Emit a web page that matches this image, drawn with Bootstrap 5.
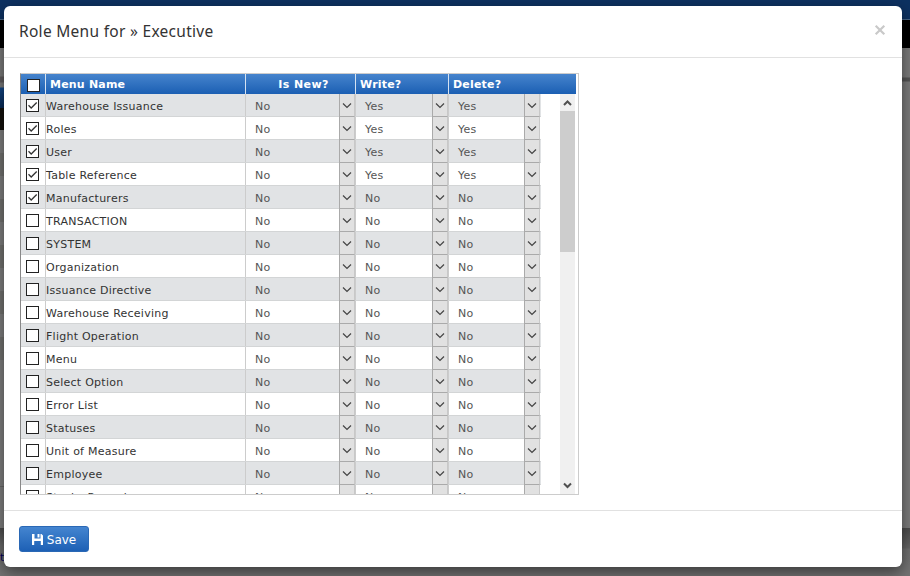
<!DOCTYPE html>
<html lang="en">
<head>
<meta charset="utf-8">
<meta name="viewport" content="width=device-width, initial-scale=1">
<title>Role Menu</title>
<link rel="stylesheet" href="https://cdn.jsdelivr.net/npm/bootstrap@5.3.0/dist/css/bootstrap.min.css">
<style>
  body { width: 910px; height: 576px; overflow: hidden; background: #737373; font: 11px "DejaVu Sans", Verdana, sans-serif; color: #333; }
  /* dimmed page behind the dialog */
  .page-left { width: 30px; height: 576px; background: linear-gradient(#0d3161 0 19px, #4a6687 19px 20px, #000 20px 48px, #7c7c7c 48px 76px, #625e60 77px 82px, #7c7c7c 83px 87px, #14498a 88px, #0a2a55 108px, #15120d 108px 130px, #808080 130px 153px, #747472 153px 176px, #808080 176px 199px, #747472 199px 222px, #808080 222px 245px, #747472 245px 268px, #808080 268px 291px, #747472 291px 314px, #808080 314px 337px, #747472 337px 360px, #808080 360px 486px, #696969 486px 487px, #808080 487px 528px, #4c4c4c 528px, #6b6b6b 546px, #737373 566px); }
  .page-right { width: 30px; height: 576px; background: linear-gradient(#0d3161 0 19px, #4a6687 19px 20px, #000 20px 48px, #7c7c7c 48px 77px, #555 78px 81px, #7c7c7c 82px 528px, #4c4c4c 528px, #666 548px, #707070 549px, #737373 566px); }
  .page-top { height: 19px; background: #0d3161; }
  .page-link-text { position: absolute; left: 0; top: 551px; color: #00005a; }
  .dialog-layer { position: absolute; inset: 6px 8px 9px 4px; }
  .role-dialog { height: 561px; border: 0; border-radius: 6px; background: #fff; box-shadow: 0 5px 15px rgba(0,0,0,.5); }
  .role-dialog .modal-header { height: 52px; padding: 0 16px 2px 15px; border-bottom: 1px solid #e1e1e1; }
  .role-dialog .modal-title { font: 15.5px/20px "Noto Sans", sans-serif; letter-spacing: .29px; color: #333; }
  .close-x { width: 12px; height: 12px; padding: 0; border: 0; background: none; line-height: 0; margin-top: -2px; }
  .role-dialog .modal-body { padding: 15px 15px 15px 16px; flex: 0 0 452px; }
  .role-dialog .modal-footer { padding: 15px; border-top: 1px solid #e1e1e1; height: 57px; justify-content: flex-start; align-items: flex-start; }
  .role-dialog .save-btn { --bs-btn-color: #fff; --bs-btn-border-color: #2a68b5; width: 70px; height: 26px; padding: 1px 0 0; margin: 0; font-size: 12px; line-height: 24px; border-radius: 3px; background: linear-gradient(#4485d0, #1d60b5); }
  .menu-grid { width: 559px; height: 422px; border: 1px solid #ccc; border-left-color: #888; overflow: hidden; }
  .grid-head { width: 555px; height: 20px; background: linear-gradient(#4684cd, #1b5fb3); color: #fff; font-weight: 700; line-height: 21px; letter-spacing: .2px; }
  .grid-head > div + div { border-left: 1px solid #d5e2f2; padding-left: 4px; }
  .grid-head .tick { margin-left: 6px; }
  .grid-head .c-new { padding-left: 6px; letter-spacing: .4px; }
  .c-check { width: 24px; } .c-name { width: 200px; } .c-new { width: 110px; } .c-write { width: 93px; } .c-delete { width: 92px; }
  .grid-head .c-delete { width: 128px; }
  .grid-view { height: 400px; width: 554px; overflow: hidden; }
  .grid-line { height: 23px; width: 520px; border-bottom: 1px solid #d3d5d6; line-height: 25px; letter-spacing: .25px; }
  .grid-line:nth-child(odd) { background: #e1e3e5; }
  .grid-line > div + div { border-left: 1px solid #ccc; }
  .grid-line .c-name { color: #333; }
  .pick { padding-left: 9px; color: #555; }
  .drop { width: 16px; height: 23px; background: #e1e1e1; border: 1px solid #aaa; border-top: 0; border-right-color: #c8c8c8; }
  .tick { width: 13px; height: 13px; border: 1px solid #222; background: #fff; margin: 5px 0 0 5px; }
  .tick svg, .drop svg { display: block; }
  .scroll-track { width: 15px; height: 400px; background: #f0f0f0; }
  .scroll-thumb { height: 141px; background: #cdcdcd; }
</style>
</head>
<body>
<div class="page-top"></div>
<div class="d-flex justify-content-between position-absolute top-0 start-0 w-100"><div class="page-left"></div><div class="page-right"></div></div>
<span class="page-link-text">tr</span>
<div class="dialog-layer">
  <div class="modal-content role-dialog">
    <div class="modal-header d-flex align-items-center">
      <h4 class="modal-title">Role Menu for » Executive</h4>
      <button class="close-x" aria-label="Close"><svg width="12" height="12" viewBox="0 0 12 12"><path d="M1.7 1.7 10.3 10.3M10.3 1.7 1.7 10.3" stroke="#c9c9c9" stroke-width="2.2"/></svg></button>
    </div>
    <div class="modal-body">
      <div class="menu-grid">
        <div class="grid-head d-flex">
          <div class="c-check"><div class="tick"></div></div>
          <div class="c-name"><span>Menu Name</span></div>
          <div class="c-new text-center"><span>Is New?</span></div>
          <div class="c-write"><span>Write?</span></div>
          <div class="c-delete"><span>Delete?</span></div>
        </div>
        <div class="grid-view d-flex justify-content-between">
          <div id="rows"></div>
          <div class="scroll-track d-flex flex-column">
            <svg width="15" height="17" viewBox="0 0 15 17"><path d="M4 11 7.500 7.500 11 11" fill="none" stroke="#505050" stroke-width="2"/></svg>
            <div class="scroll-thumb"></div>
            <svg class="mt-auto" width="15" height="17" viewBox="0 0 15 17"><path d="M4 6.500 7.500 10 11 6.500" fill="none" stroke="#505050" stroke-width="2"/></svg>
          </div>
        </div>
      </div>
    </div>
    <div class="modal-footer">
      <button class="btn save-btn d-flex align-items-center justify-content-center gap-1">
        <svg width="11" height="11" viewBox="0 0 11 11"><path fill="#fff" fill-rule="evenodd" d="M0 0H2.500V4.500H8.500V0H9.500L11 1.500V11H8.800V7H2.200V11H0ZM5.500 0H7.500V3.500H5.500Z"/></svg>
        <span>Save</span>
      </button>
    </div>
  </div>
</div>
<script src="https://cdn.jsdelivr.net/npm/bootstrap@5.3.0/dist/js/bootstrap.bundle.min.js"></script>
<script>
  const names = ["Warehouse Issuance", "Roles", "User", "Table Reference", "Manufacturers", "TRANSACTION", "SYSTEM", "Organization", "Issuance Directive", "Warehouse Receiving", "Flight Operation", "Menu", "Select Option", "Error List", "Statuses", "Unit of Measure", "Employee", "Stocks Record"];
  const check = '<svg width="11" height="11" viewBox="0 0 11 11"><path d="M1.500 5.300 4.200 8 9.700 2.500" fill="none" stroke="#333" stroke-width="1.300"/></svg>';
  const cell = (cls, value) => `<div class="${cls} pick d-flex justify-content-between"><span>${value}</span><div class="drop"><svg width="14" height="22" viewBox="0 0 14 22"><path d="M3 9.500 7 13.500 11 9.500" fill="none" stroke="#444" stroke-width="1.200"/></svg></div></div>`;
  document.getElementById("rows").innerHTML = names.map((name, i) => {
    const yes = i < 4 ? "Yes" : "No";
    return `<div class="grid-line d-flex"><div class="c-check"><div class="tick">${i < 5 ? check : ""}</div></div><div class="c-name"><span>${name}</span></div>${cell("c-new", "No")}${cell("c-write", yes)}${cell("c-delete", yes)}</div>`;
  }).join("");
</script>
</body>
</html>
